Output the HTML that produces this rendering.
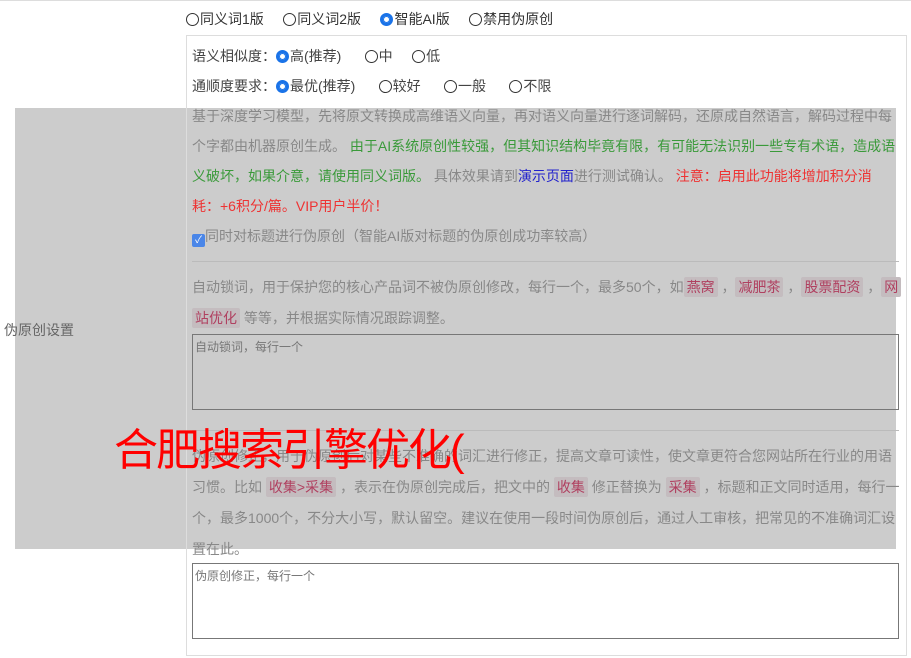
<!DOCTYPE html>
<html><head><meta charset="utf-8"><style>
body{margin:0;width:911px;height:658px;background:#fff;position:relative;overflow:hidden;font-family:"Liberation Sans","Noto Sans CJK SC",sans-serif;font-size:14px;color:#555}
.a{position:absolute;white-space:nowrap;line-height:20px}
.r{display:inline-block;width:13px;height:13px;border:1px solid #333;border-radius:50%;vertical-align:-2px;box-sizing:border-box;margin-right:1px}
.r.on{border:3px solid #1a73e8;background:#fff;box-shadow:0 0 0 1px #1a73e8 inset}
.g{color:#3a9a3a}.red{color:#e33}.b{color:#22c}
.k{background:#c4bcbf;color:#b04060;padding:2px 3px;border-radius:2px}
.ta{position:absolute;left:192px;width:707px;border:1px solid #777;box-sizing:border-box;font-size:12px;color:#777;padding:3px 2px}
</style></head><body>
<div style="position:absolute;left:15px;top:108px;width:881px;height:441px;background:#cccccc"></div>
<div style="position:absolute;left:186px;top:35px;width:719px;height:619px;border:1px solid #ddd"></div>
<div style="position:absolute;left:0;top:0;width:911px;height:1px;background:#ddd"></div>
<div class="a" style="left:186px;top:9px;color:#333"><span class="r"></span>同义词1版 &nbsp;&nbsp;&nbsp;&nbsp;<span class="r"></span>同义词2版 &nbsp;&nbsp;&nbsp;&nbsp;<span class="r on"></span>智能AI版 &nbsp;&nbsp;&nbsp;&nbsp;<span class="r"></span>禁用伪原创</div>
<div class="a" style="left:192px;top:46px;color:#444">语义相似度：<span class="r on"></span>高(推荐) &nbsp;&nbsp;&nbsp;&nbsp;&nbsp;<span class="r"></span>中 &nbsp;&nbsp;&nbsp;&nbsp;<span class="r"></span>低</div>
<div class="a" style="left:192px;top:76px;color:#444">通顺度要求：<span class="r on"></span>最优(推荐) &nbsp;&nbsp;&nbsp;&nbsp;&nbsp;<span class="r"></span>较好 &nbsp;&nbsp;&nbsp;&nbsp;&nbsp;<span class="r"></span>一般 &nbsp;&nbsp;&nbsp;&nbsp;&nbsp;<span class="r"></span>不限</div>
<div class="a" style="left:192px;top:106px;color:#888">基于深度学习模型，先将原文转换成高维语义向量，再对语义向量进行逐词解码，还原成自然语言，解码过程中每</div>
<div class="a" style="left:192px;top:136px;color:#888">个字都由机器原创生成。 <span class="g">由于AI系统原创性较强，但其知识结构毕竟有限，有可能无法识别一些专有术语，造成语</span></div>
<div class="a" style="left:192px;top:166px;color:#888"><span class="g">义破坏，如果介意，请使用同义词版。</span> 具体效果请到<span class="b">演示页面</span>进行测试确认。 <span class="red">注意：启用此功能将增加积分消</span></div>
<div class="a red" style="left:192px;top:196px">耗：+6积分/篇。VIP用户半价！</div>
<div class="a" style="left:192px;top:226px;color:#888"><span style="display:inline-block;width:13px;height:13px;background:#4a86e8;border-radius:2px;vertical-align:-2px;color:#fff;font-size:10px;line-height:13px;text-align:center">✓</span>同时对标题进行伪原创（智能AI版对标题的伪原创成功率较高）</div>
<div style="position:absolute;left:192px;top:261px;width:707px;height:1px;background:#bbb"></div>
<div class="a" style="left:192px;top:277px;color:#888">自动锁词，用于保护您的核心产品词不被伪原创修改，每行一个，最多50个，如<span class="k">燕窝</span> ，<span class="k">减肥茶</span> ，<span class="k">股票配资</span> ，<span class="k">网</span></div>
<div class="a" style="left:192px;top:308px;color:#888"><span class="k">站优化</span> 等等，并根据实际情况跟踪调整。</div>
<div class="ta" style="top:334px;height:76px">自动锁词，每行一个</div>
<div style="position:absolute;left:192px;top:430px;width:707px;height:1px;background:#bbb"></div>
<div class="a" style="left:192px;top:446px;color:#888">伪原创修正，用于伪原创后对某些不准确的词汇进行修正，提高文章可读性，使文章更符合您网站所在行业的用语</div>
<div class="a" style="left:192px;top:477px;color:#888">习惯。比如 <span class="k">收集&gt;采集</span> ，表示在伪原创完成后，把文中的 <span class="k">收集</span> 修正替换为 <span class="k">采集</span> ，标题和正文同时适用，每行一</div>
<div class="a" style="left:192px;top:508px;color:#888">个，最多1000个，不分大小写，默认留空。建议在使用一段时间伪原创后，通过人工审核，把常见的不准确词汇设</div>
<div class="a" style="left:192px;top:539px;color:#888">置在此。</div>
<div class="ta" style="top:563px;height:76px">伪原创修正，每行一个</div>
<div class="a" style="left:4px;top:320px;color:#666">伪原创设置</div>
<div class="a" style="left:114px;top:424px;color:#f00;font-size:44px;line-height:54px;letter-spacing:-2px">合肥搜索引擎优化(</div>
</body></html>
